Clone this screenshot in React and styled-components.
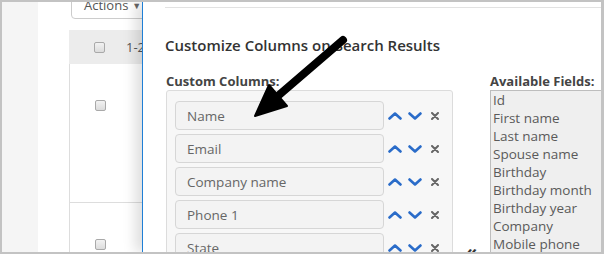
import styled, { createGlobalStyle } from 'styled-components'

const GlobalStyle = createGlobalStyle`
  html, body { margin: 0; padding: 0; background: #fff; }
  body { font-family: "Open Sans", "Liberation Sans", sans-serif; }
`

const customColumns = ['Name', 'Email', 'Company name', 'Phone 1', 'State']
const availableFields = ['Id', 'First name', 'Last name', 'Spouse name', 'Birthday', 'Birthday month', 'Birthday year', 'Company', 'Mobile phone', 'Phone']

function Chevron({ down }) {
    return (
        <svg width="14" height="8" viewBox="0 0 14 8">
            <path d={down ? 'M1.5 1.5 L7 6.5 L12.5 1.5' : 'M1.5 6.5 L7 1.5 L12.5 6.5'} fill="none" stroke="#2a6cc9" strokeWidth="2.6" strokeLinecap="round" strokeLinejoin="round" />
        </svg>
    )
}

function Remove() {
    return (
        <svg width="8" height="8" viewBox="0 0 8 8">
            <path d="M1 1 L7 7 M7 1 L1 7" stroke="#666" strokeWidth="2" strokeLinecap="round" />
        </svg>
    )
}

export default function App() {
    return (
        <>
            <GlobalStyle />
            <Frame>
                <Sidebar />
                <ListPane>
                    <ActionsButton>Actions <span>▼</span></ActionsButton>
                    <Table>
                        <HeaderRow>
                            <CheckCell><Checkbox /></CheckCell>
                            <span>1-2</span>
                        </HeaderRow>
                        <Row $height={139}><CheckCell><Checkbox /></CheckCell></Row>
                        <Row $height={80}><CheckCell><Checkbox /></CheckCell></Row>
                    </Table>
                </ListPane>
                <Modal>
                    <TopRule />
                    <Title>Customize Columns on Search Results</Title>
                    <Body>
                        <Section>
                            <Label>Custom Columns:</Label>
                            <Panel>
                                {customColumns.map(name => (
                                    <ColumnRow key={name}>
                                        <FieldBox>{name}</FieldBox>
                                        <Controls>
                                            <Chevron />
                                            <Chevron down />
                                            <RemoveWrap><Remove /></RemoveWrap>
                                        </Controls>
                                    </ColumnRow>
                                ))}
                            </Panel>
                        </Section>
                        <MoveControls>«</MoveControls>
                        <Section>
                            <Label>Available Fields:</Label>
                            <FieldList>
                                {availableFields.map(f => <FieldItem key={f}>{f}</FieldItem>)}
                            </FieldList>
                        </Section>
                    </Body>
                </Modal>
                <Pointer width="604" height="254" viewBox="0 0 604 254">
                    <line x1="343" y1="40" x2="279" y2="95" stroke="#000" strokeWidth="8" strokeLinecap="round" />
                    <polygon points="255,116 287,106 269,85" fill="#000" stroke="#000" strokeWidth="2" strokeLinejoin="round" />
                </Pointer>
            </Frame>
        </>
    )
}

const Frame = styled.div`
    position: relative;
    width: 604px;
    height: 254px;
    box-sizing: border-box;
    border: 2px solid #c3c3c3;
    border-right-width: 3px;
    display: flex;
    overflow: hidden;
    background: #fff;
`

const Sidebar = styled.div`
    flex: none;
    width: 36px;
    background: #f5f5f5;
`

const ListPane = styled.div`
    flex: none;
    width: 104px;
    padding-left: 31px;
    box-sizing: border-box;
    overflow: hidden;
    background: #fff;
`

const ActionsButton = styled.div`
    width: 110px;
    height: 28px;
    margin: -11px 0 0 2px;
    box-sizing: border-box;
    padding: 0 0 0 12px;
    border: 1px solid #ccc;
    border-radius: 4px;
    display: flex;
    align-items: center;
    gap: 4px;
    font-size: 13px;
    color: #555;

    span {
        font-size: 9px;
        color: #666;
    }
`

const Table = styled.div`
    width: 320px;
    margin-top: 11px;
`

const HeaderRow = styled.div`
    height: 34px;
    background: #ececec;
    display: flex;
    align-items: center;
    font-size: 13px;
    color: #555;
`

const Row = styled.div`
    height: ${p => p.$height}px;
    box-sizing: border-box;
    border-left: 1px solid #ddd;
    border-bottom: 1px solid #ddd;
    padding-top: 36px;
`

const CheckCell = styled.div`
    width: 57px;
    padding-left: 25px;
    box-sizing: border-box;
    display: flex;
`

const Checkbox = styled.div`
    width: 11px;
    height: 11px;
    box-sizing: border-box;
    border: 1px solid #a9a9a9;
    border-radius: 2px;
    background: linear-gradient(#f2f2f2, #dcdcdc);
`

const Modal = styled.div`
    position: relative;
    z-index: 1;
    flex: 1;
    min-width: 0;
    background: #fff;
    border-left: 1px solid #1f7fd6;
    box-shadow: -7px 0 12px rgba(0, 0, 0, 0.13);
    padding-left: 22px;
`

const TopRule = styled.div`
    height: 1px;
    margin-top: 5px;
    background: #e2e2e2;
`

const Title = styled.h2`
    margin: 27px 0 0;
    font-size: 15px;
    line-height: 20px;
    font-weight: 600;
    color: #333;
`

const Body = styled.div`
    display: flex;
    margin-top: 18px;
    padding-left: 1px;
`

const Section = styled.div`
    flex: none;
    display: flex;
    flex-direction: column;
`

const Label = styled.div`
    font-size: 13px;
    line-height: 16px;
    font-weight: 700;
    color: #444;
    margin-bottom: 1px;
`

const Panel = styled.div`
    width: 287px;
    box-sizing: border-box;
    border: 1px solid #dcdcdc;
    border-radius: 3px;
    background: #f7f7f7;
    padding: 10px 0 0 8px;
    display: flex;
    flex-direction: column;
    gap: 4px;
`

const ColumnRow = styled.div`
    display: flex;
    align-items: center;
`

const FieldBox = styled.div`
    width: 209px;
    height: 29px;
    box-sizing: border-box;
    border: 1px solid #d6d6d6;
    border-radius: 4px;
    background: #f3f3f3;
    padding-left: 11px;
    display: flex;
    align-items: center;
    font-size: 13.5px;
    color: #666;
`

const Controls = styled.div`
    display: flex;
    align-items: center;
    gap: 6px;
    margin-left: 4px;
`

const RemoveWrap = styled.span`
    display: flex;
    margin-left: 3px;
`

const MoveControls = styled.div`
    flex: none;
    width: 37px;
    padding-top: 168px;
    text-align: center;
    font-size: 18px;
    font-weight: 700;
    color: #333;
    line-height: 20px;
`

const FieldList = styled.div`
    width: 140px;
    border-top: 1px solid #bdbdbd;
    border-left: 1px solid #bdbdbd;
    background: #efefef;
    padding: 0 0 0 2px;
`

const FieldItem = styled.div`
    font-size: 13.5px;
    line-height: 18px;
    color: #5a5a5a;
    white-space: nowrap;
`

const Pointer = styled.svg`
    position: absolute;
    left: -2px;
    top: -2px;
    z-index: 5;
    pointer-events: none;
`
